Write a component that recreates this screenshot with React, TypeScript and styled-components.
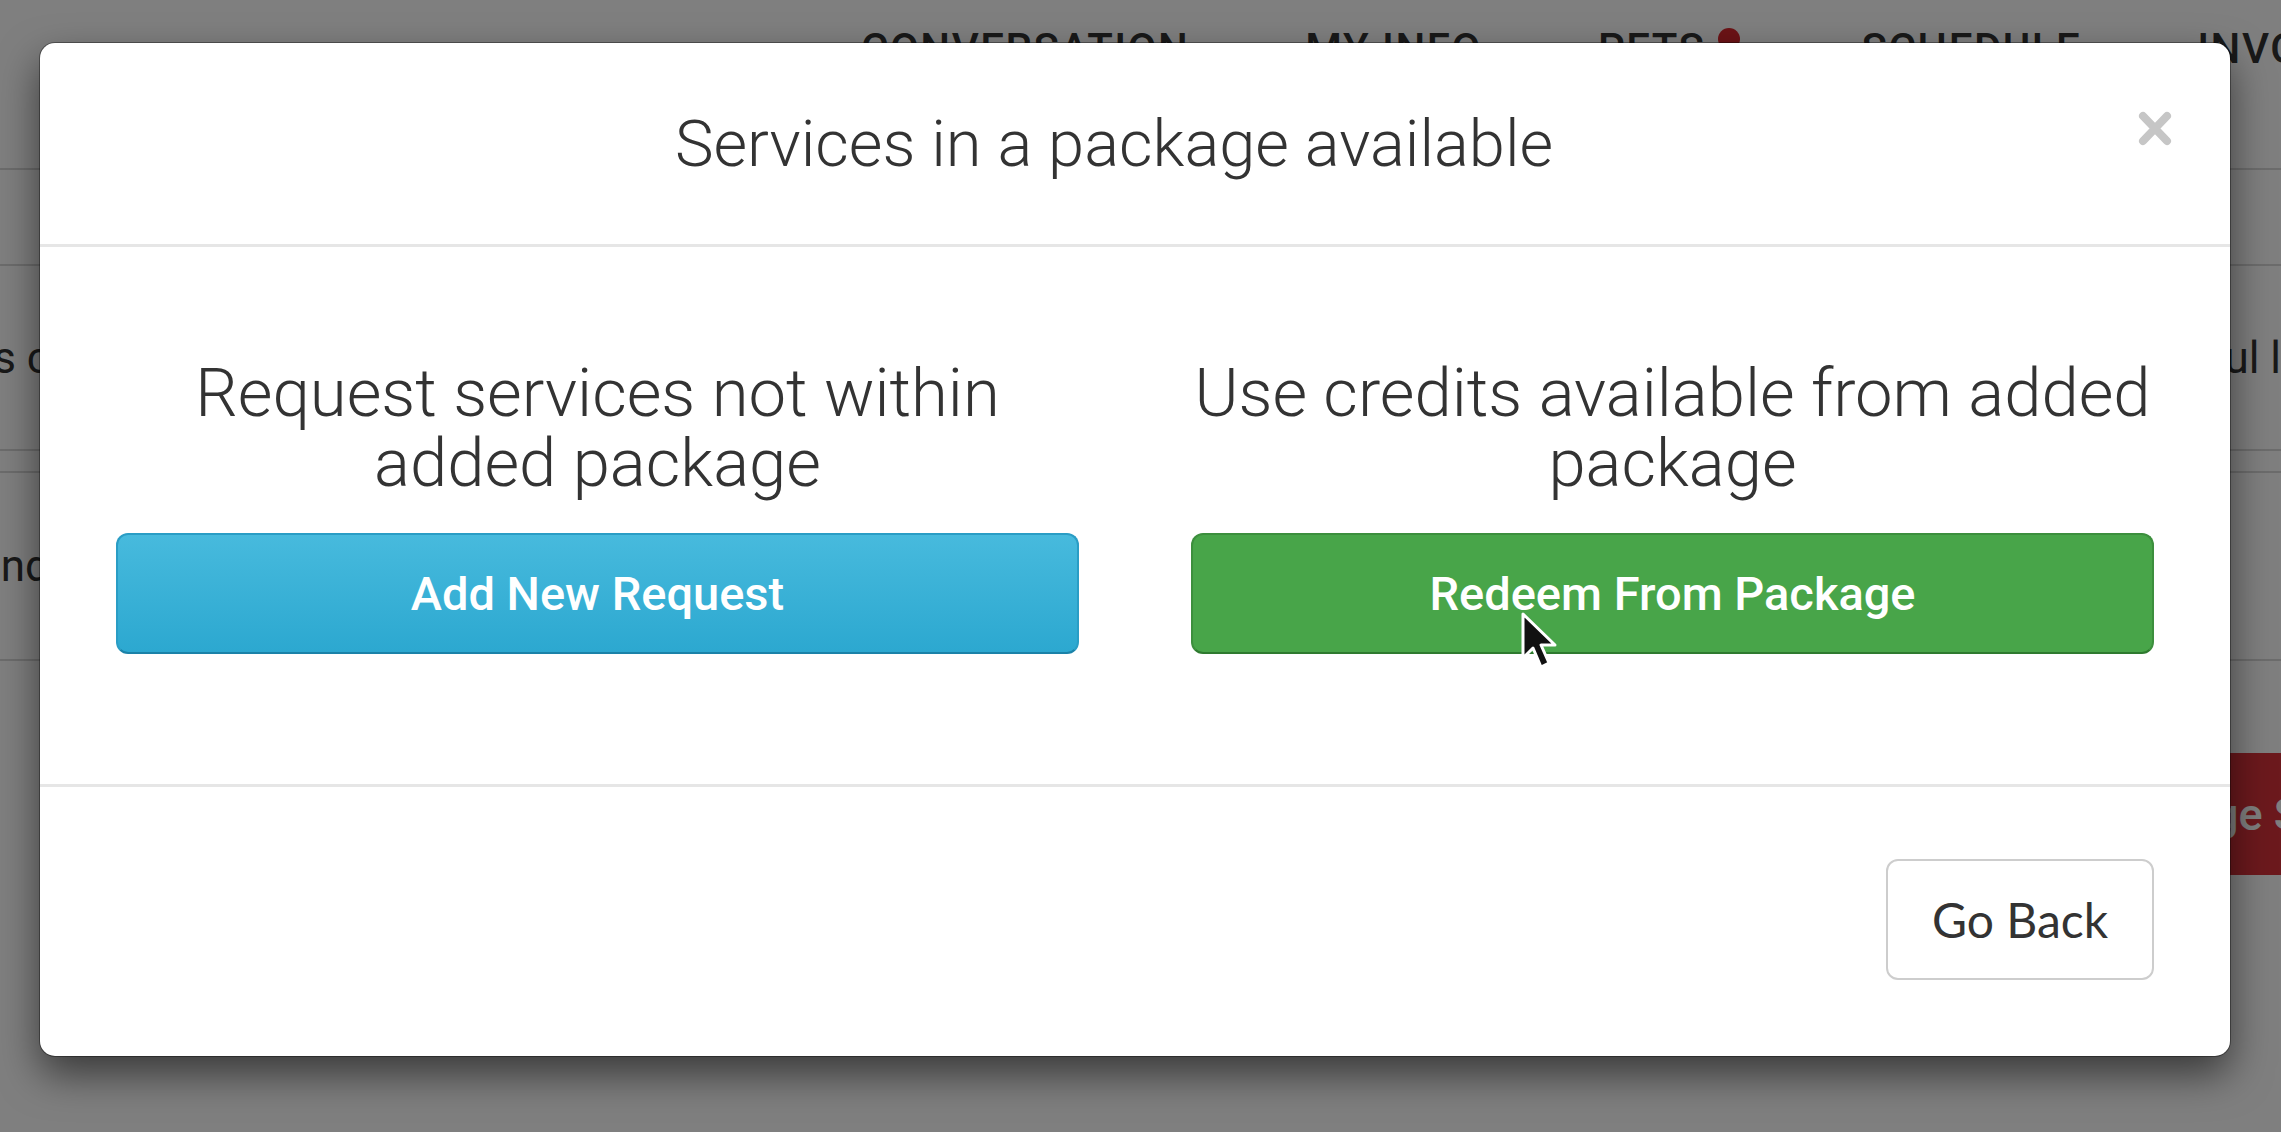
import styled, { createGlobalStyle } from 'styled-components'

const GlobalStyle = createGlobalStyle`
  html, body {
    margin: 0;
    padding: 0;
    background: #fff;
    overflow: hidden;
    font-family: Roboto, "Noto Sans", "Liberation Sans", sans-serif;
  }
  * { box-sizing: border-box; }
`

const navItems = ['Conversation', 'My Info', 'Pets', 'Schedule', 'Invoices']

export default function App (): JSX.Element {
  return <Page>
    <GlobalStyle/>
    <TopNav>
      {navItems.map(item =>
        <NavItem key={item} $badge={item === 'Pets'}>
          {item}
          {item === 'Pets' && <Badge/>}
        </NavItem>)}
    </TopNav>
    <ListRow $height={96}/>
    <ListRow $height={185}>
      <RowText $shift={-150}>Services covered</RowText>
      <RowText $shift={0}>Useful links</RowText>
    </ListRow>
    <ListRow $height={22}/>
    <ListRow $height={188}>
      <RowText $shift={-50}>Pending</RowText>
    </ListRow>
    <ActionRow>
      <DangerButton>Manage Services</DangerButton>
    </ActionRow>

    <Overlay>
      <Modal>
        <ModalHeader>
          <ModalTitle>Services in a package available</ModalTitle>
          <CloseButton aria-label='Close'>
            <svg width='34' height='35' viewBox='0 0 34 35'>
              <path d='M5 5 L29 30 M29 5 L5 30' stroke='#c6c6c6' strokeWidth='8' strokeLinecap='round'/>
            </svg>
          </CloseButton>
        </ModalHeader>
        <ModalBody>
          <Choice>
            <ChoiceTitle>Request services not within<br/>added package</ChoiceTitle>
            <ActionButton $variant='info'>Add New Request</ActionButton>
          </Choice>
          <Choice>
            <ChoiceTitle>Use credits available from added<br/>package</ChoiceTitle>
            <ActionButton $variant='success'>
              Redeem From Package
              <Cursor width='38' height='60' viewBox='0 0 38 60'>
                <path d='M2 2 L2 46 L12 36 L20 55 L28 51 L20 33 L34 33 Z' fill='#111' stroke='#fff' strokeWidth='3' strokeLinejoin='round'/>
              </Cursor>
            </ActionButton>
          </Choice>
        </ModalBody>
        <ModalFooter>
          <GoBackButton>Go Back</GoBackButton>
        </ModalFooter>
      </Modal>
    </Overlay>
  </Page>
}

const Page = styled.div`
  width: 2281px;
  height: 1132px;
  position: relative;
  overflow: hidden;
  background: #fff;
`

const TopNav = styled.nav`
  height: 170px;
  display: flex;
  align-items: flex-start;
  gap: 116px;
  padding: 24px 0 0 861px;
  border-bottom: 2px solid #d8d8d8;
  white-space: nowrap;
`

const NavItem = styled.span<{ $badge: boolean }>`
  position: relative;
  margin-right: ${p => p.$badge ? '40px' : '0'};
  font-size: 42px;
  font-weight: 500;
  letter-spacing: 1.5px;
  text-transform: uppercase;
  color: #333;
`

const Badge = styled.span`
  position: absolute;
  top: 4px;
  right: -34px;
  width: 22px;
  height: 22px;
  border-radius: 50%;
  background: #d9262c;
`

const ListRow = styled.div<{ $height: number }>`
  height: ${p => p.$height}px;
  display: flex;
  align-items: center;
  justify-content: space-between;
  border-bottom: 2px solid #d8d8d8;
  white-space: nowrap;
`

const RowText = styled.span<{ $shift: number }>`
  margin-left: ${p => p.$shift}px;
  font-size: 44px;
  color: #333;
  &:last-child:not(:first-child) {
    margin-left: 0;
    margin-right: -80px;
  }
`

const ActionRow = styled.div`
  display: flex;
  justify-content: flex-end;
  padding-top: 92px;
  white-space: nowrap;
`

const DangerButton = styled.div`
  height: 122px;
  margin-right: -205px;
  padding: 0 40px;
  display: flex;
  align-items: center;
  background: #d9333a;
  color: #fff;
  font-size: 45px;
  font-weight: 500;
  border-radius: 8px;
`

const Overlay = styled.div`
  position: absolute;
  inset: 0;
  background: rgba(0, 0, 0, 0.5);
  padding: 43px 0 0 40px;
`

const Modal = styled.div`
  width: 2190px;
  background: #fff;
  border-radius: 15px;
  box-shadow: 0 0 0 1px rgba(0, 0, 0, 0.35), 0 18px 40px rgba(0, 0, 0, 0.55);
`

const ModalHeader = styled.header`
  height: 204px;
  display: flex;
  align-items: center;
  border-bottom: 3px solid #e6e6e6;
`

const ModalTitle = styled.h3`
  flex: 1;
  margin: 0;
  padding-left: 50px;
  text-align: center;
  font-size: 65px;
  font-weight: 300;
  color: #333;
  white-space: nowrap;
`

const CloseButton = styled.button`
  margin: 0 58px 30px 0;
  padding: 0;
  border: 0;
  background: none;
  display: flex;
`

const ModalBody = styled.div`
  display: grid;
  grid-template-columns: 1fr 1fr;
  column-gap: 112px;
  padding: 111px 76px 130px;
  border-bottom: 3px solid #e6e6e6;
`

const Choice = styled.div`
  display: flex;
  flex-direction: column;
  align-items: stretch;
  text-align: center;
`

const ChoiceTitle = styled.h4`
  margin: 0 0 35px;
  font-size: 67px;
  line-height: 70px;
  font-weight: 300;
  color: #333;
  white-space: nowrap;
`

const ActionButton = styled.div<{ $variant: 'info' | 'success' }>`
  position: relative;
  height: 121px;
  display: flex;
  align-items: center;
  justify-content: center;
  border-radius: 12px;
  font-size: 47px;
  font-weight: 500;
  color: #fff;
  border: 2px solid ${p => p.$variant === 'info' ? '#2a9dc5' : '#3c8f3d'};
  border-bottom-color: ${p => p.$variant === 'info' ? '#1b82a8' : '#2e7a2f'};
  background: ${p => p.$variant === 'info'
    ? 'linear-gradient(to bottom, #47badd 0%, #2ca8d0 100%)'
    : '#48a549'};
`

const Cursor = styled.svg`
  position: absolute;
  left: 328px;
  top: 77px;
`

const ModalFooter = styled.footer`
  display: flex;
  justify-content: flex-end;
  padding: 72px 76px 76px;
`

const GoBackButton = styled.div`
  width: 268px;
  height: 121px;
  display: flex;
  align-items: center;
  justify-content: center;
  border: 2px solid #cdcdcd;
  border-radius: 12px;
  background: #fff;
  font-family: Lato, Roboto, sans-serif;
  font-size: 48px;
  color: #333;
`
